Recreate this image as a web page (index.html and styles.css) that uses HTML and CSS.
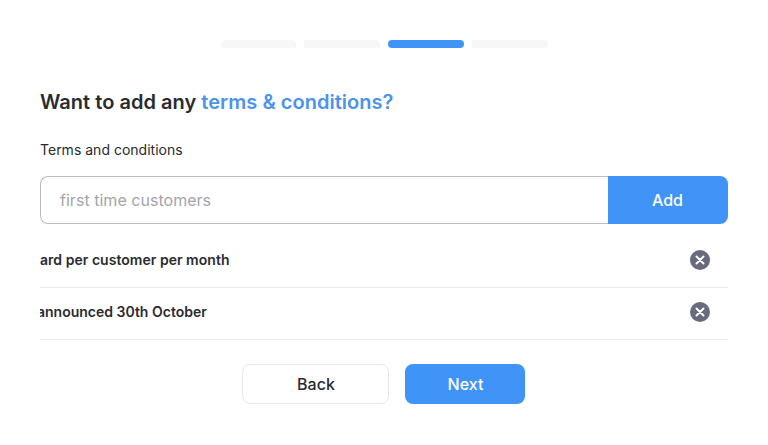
FILE: index.html
```html
<!DOCTYPE html>
<html lang="en">
<head>
<meta charset="utf-8">
<title>Terms and conditions</title>
<link rel="stylesheet" href="styles.css">
</head>
<body>
<main class="page">
  <div class="steps">
    <span class="step step-first"></span>
    <span class="step step-second"></span>
    <span class="step step-active"></span>
    <span class="step step-last"></span>
  </div>
  <h1 class="title">Want to add any <span class="accent">terms &amp; conditions?</span></h1>
  <label class="label" for="term">Terms and conditions</label>
  <div class="field">
    <input class="input" id="term" type="text" placeholder="first time customers">
    <button class="add" type="button">Add</button>
  </div>
  <ul class="terms">
    <li class="term">
      <div class="term-clip"><span class="term-text">ard per customer per month</span></div>
      <svg class="remove" viewBox="0 0 20 20"><circle cx="10" cy="10" r="10"/><path d="M6.5 6.5l7 7M13.5 6.5l-7 7"/></svg>
    </li>
    <li class="term">
      <div class="term-clip"><span class="term-text term-shifted">announced 30th October</span></div>
      <svg class="remove" viewBox="0 0 20 20"><circle cx="10" cy="10" r="10"/><path d="M6.5 6.5l7 7M13.5 6.5l-7 7"/></svg>
    </li>
  </ul>
  <div class="actions">
    <button class="button back" type="button">Back</button>
    <button class="button next" type="button">Next</button>
  </div>
</main>
</body>
</html>
```
FILE: styles.css
```css
* { box-sizing: border-box; }
body { margin: 0; background: #fff; color: #2a2b2f; font-family: Inter, "Liberation Sans", sans-serif; }
.page { height: 445px; padding: 40px 40px 0; overflow: hidden; }
.steps { display: flex; justify-content: center; gap: 8px; height: 8px; }
.step { width: 76px; background: #f7f7f8; }
.step-first { width: 75px; margin-left: 1px; border-radius: 5px 5px 0 2px; }
.step-second { border-radius: 1px 5px 0 2px; }
.step-active { border-radius: 4px; background: #4094f7; }
.step-last { border-radius: 0 4px 4px 0; }
.title { margin: 42px 0 0; font-size: 20px; line-height: 25px; font-weight: 600; letter-spacing: 0.03px; white-space: nowrap; }
.accent { color: #4a94ec; }
.label { display: block; margin-top: 25px; font-size: 14px; line-height: 20px; letter-spacing: 0.01px; }
.field { display: flex; height: 48px; margin-top: 16px; }
.input { flex: 1; min-width: 0; border: 1px solid #babdbf; border-right: 0; border-radius: 8px 0 0 8px; padding: 0 19px; font: 16px Inter, sans-serif; letter-spacing: 0.03px; outline: 0; }
.input::placeholder { color: #a3a5aa; opacity: 1; }
.add { width: 120px; border: 0; border-radius: 0 8px 8px 0; padding: 0 7px 0 6px; background: #4094f7; color: #fff; font: 500 16px Inter, sans-serif; }
.terms { list-style: none; margin: 12px 0 0; padding: 0; }
.term { display: flex; align-items: center; height: 52px; padding: 0 18px 3px 0; border-bottom: 1px solid #eaebed; }
.term-clip { flex: 1; overflow: hidden; font-size: 14px; line-height: 20px; font-weight: 600; letter-spacing: 0.03px; }
.term-text { display: inline-block; }
.term-shifted { margin-left: -3px; letter-spacing: 0; }
.remove { width: 20px; height: 20px; }
.remove circle { fill: #686b7c; }
.remove path { fill: none; stroke: #fff; stroke-width: 2; stroke-linecap: round; }
.actions { display: flex; justify-content: center; gap: 16px; margin: 24px 1px 0 0; }
.button { height: 40px; border-radius: 8px; font: 500 16px Inter, sans-serif; }
.back { width: 147px; padding: 0 5px 0 6px; border: 1px solid #e8e9eb; background: #fff; color: #2a2b2f; }
.next { width: 120px; padding: 0 5px 0 6px; border: 0; background: #4094f7; color: #fff; }
```
